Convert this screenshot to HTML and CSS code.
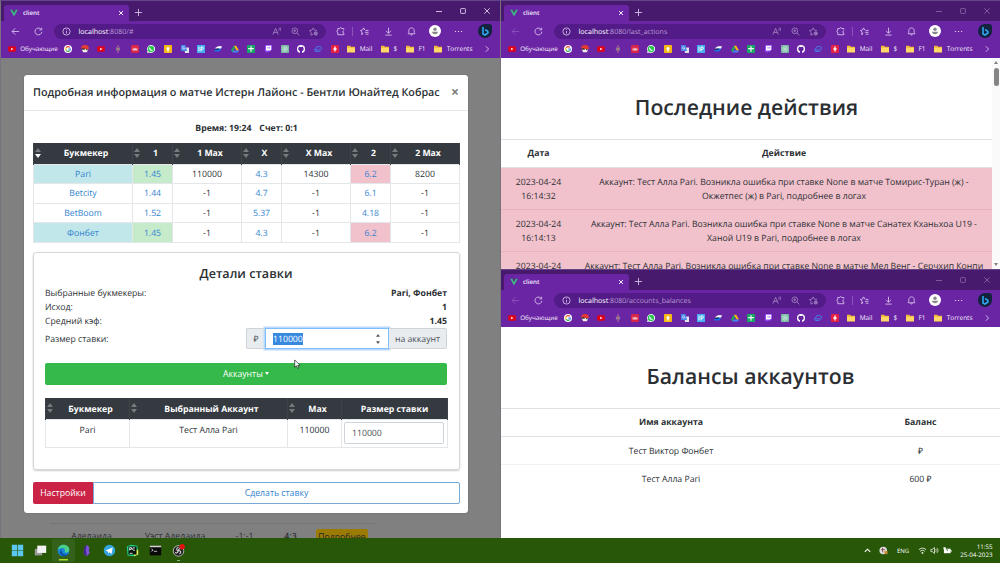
FILE: index.html
```html
<!DOCTYPE html>
<html lang="ru">
<head>
    <meta charset="UTF-8">
    <meta name="viewport" content="width=device-width, initial-scale=1.0">
    <title>client</title>
    <link rel="stylesheet" href="styles.css">
</head>
<body>
    <div class="windows">
        <div class="window window-main">
            <div class="chrome" data-path="/#"></div>
            <div class="page page-dimmed">
                <div class="match-row">
                    <span class="team1">Аделаида</span>
                    <span class="team2">Уэст Аделаида</span>
                    <span class="score1">-1:-1</span>
                    <span class="score2">4:3</span>
                    <button class="btn-more">Подробнее</button>
                </div>
                <div class="modal">
                    <div class="modal-header">
                        <h5>Подробная информация о матче Истерн Лайонс - Бентли Юнайтед Кобрас</h5>
                        <button class="close">×</button>
                    </div>
                    <div class="modal-body">
                        <p class="match-info"><span>Время: 19:24</span><span>Счет: 0:1</span></p>
                        <table class="table odds">
                            <colgroup>
                                <col class="w-name"><col class="w-odd"><col class="w-max"><col class="w-odd"><col class="w-max"><col class="w-odd"><col class="w-max">
                            </colgroup>
                            <thead>
                                <tr>
                                    <th class="sort sort-down">Букмекер</th>
                                    <th class="sort">1</th>
                                    <th class="sort">1 Max</th>
                                    <th class="sort">X</th>
                                    <th class="sort">X Max</th>
                                    <th class="sort">2</th>
                                    <th class="sort">2 Max</th>
                                </tr>
                            </thead>
                            <tbody>
                                <tr>
                                    <td class="link info">Pari</td>
                                    <td class="link success">1.45</td>
                                    <td>110000</td>
                                    <td class="link">4.3</td>
                                    <td>14300</td>
                                    <td class="link danger">6.2</td>
                                    <td>8200</td>
                                </tr>
                                <tr>
                                    <td class="link">Betcity</td>
                                    <td class="link">1.44</td>
                                    <td>-1</td>
                                    <td class="link">4.7</td>
                                    <td>-1</td>
                                    <td class="link">6.1</td>
                                    <td>-1</td>
                                </tr>
                                <tr>
                                    <td class="link">BetBoom</td>
                                    <td class="link">1.52</td>
                                    <td>-1</td>
                                    <td class="link">5.37</td>
                                    <td>-1</td>
                                    <td class="link">4.18</td>
                                    <td>-1</td>
                                </tr>
                                <tr>
                                    <td class="link info">Фонбет</td>
                                    <td class="link success">1.45</td>
                                    <td>-1</td>
                                    <td class="link">4.3</td>
                                    <td>-1</td>
                                    <td class="link danger">6.2</td>
                                    <td>-1</td>
                                </tr>
                            </tbody>
                        </table>
                        <div class="card">
                            <h4>Детали ставки</h4>
                            <div class="detail"><span>Выбранные букмекеры:</span><b>Pari, Фонбет</b></div>
                            <div class="detail"><span>Исход:</span><b>1</b></div>
                            <div class="detail"><span>Средний кэф:</span><b>1.45</b></div>
                            <div class="detail detail-stake">
                                <span>Размер ставки:</span>
                                <div class="input-group">
                                    <span class="addon addon-left">₽</span>
                                    <div class="stake-input">
                                        <span class="selected">110000</span>
                                        <svg class="spin" viewBox="0 0 6 12"><path d="M3 1l2 2.800H1zM3 11l2-2.800H1z"/></svg>
                                    </div>
                                    <span class="addon addon-right">на аккаунт</span>
                                </div>
                            </div>
                            <button class="btn-accounts">Аккаунты <i class="caret"></i></button>
                            <table class="table accounts">
                                <colgroup>
                                    <col class="w-bk"><col class="w-acc"><col class="w-lim"><col class="w-size">
                                </colgroup>
                                <thead>
                                    <tr>
                                        <th class="sort">Букмекер</th>
                                        <th class="sort">Выбранный Аккаунт</th>
                                        <th class="sort">Max</th>
                                        <th>Размер ставки</th>
                                    </tr>
                                </thead>
                                <tbody>
                                    <tr>
                                        <td>Pari</td>
                                        <td>Тест Алла Pari</td>
                                        <td>110000</td>
                                        <td><div class="size-input">110000</div></td>
                                    </tr>
                                </tbody>
                            </table>
                        </div>
                        <div class="btn-group">
                            <button class="btn-settings">Настройки</button>
                            <button class="btn-bet">Сделать ставку</button>
                        </div>
                    </div>
                </div>
                <svg class="cursor" viewBox="0 0 10 15"><path d="M1 1v10.500l2.500-2.200 1.700 3.900 1.800-.8-1.700-3.800h3.300z" fill="#fff" stroke="#222" stroke-width="1"/></svg>
            </div>
        </div>

        <div class="window window-actions inactive">
            <div class="chrome" data-path="/last_actions"></div>
            <div class="page page-scroll">
                <div class="content">
                    <h1>Последние действия</h1>
                    <table class="list actions">
                        <thead>
                            <tr><th class="w-date">Дата</th><th>Действие</th></tr>
                        </thead>
                        <tbody>
                            <tr>
                                <td>2023-04-24<br>16:14:32</td>
                                <td>Аккаунт: Тест Алла Pari. Возникла ошибка при ставке None в матче Томирис-Туран (ж) -<br>Окжетпес (ж) в Pari, подробнее в логах</td>
                            </tr>
                            <tr>
                                <td>2023-04-24<br>16:14:13</td>
                                <td>Аккаунт: Тест Алла Pari. Возникла ошибка при ставке None в матче Санатех Кханьхоа U19 -<br>Ханой U19 в Pari, подробнее в логах</td>
                            </tr>
                            <tr>
                                <td>2023-04-24</td>
                                <td>Аккаунт: Тест Алла Pari. Возникла ошибка при ставке None в матче Мел Венг - Серчхип Конпи</td>
                            </tr>
                        </tbody>
                    </table>
                </div>
                <div class="scrollbar">
                    <i class="arrow-up"></i>
                    <i class="thumb"></i>
                    <i class="arrow-down"></i>
                </div>
            </div>
        </div>

        <div class="window window-balances inactive">
            <div class="chrome" data-path="/accounts_balances"></div>
            <div class="page">
                <div class="content">
                    <h1>Балансы аккаунтов</h1>
                    <table class="list balances">
                        <thead>
                            <tr><th>Имя аккаунта</th><th class="w-balance">Баланс</th></tr>
                        </thead>
                        <tbody>
                            <tr><td>Тест Виктор Фонбет</td><td>₽</td></tr>
                            <tr><td>Тест Алла Pari</td><td>600 ₽</td></tr>
                        </tbody>
                    </table>
                </div>
            </div>
        </div>
    </div>

    <div class="taskbar">
        <div class="apps">
            <span class="app"><svg viewBox="0 0 16 16"><path d="M1 1h6.600v6.600H1zM8.400 1H15v6.600H8.400zM1 8.400h6.600V15H1zM8.400 8.400H15V15H8.400z" fill="#5cc8f2"/></svg></span>
            <span class="app"><svg viewBox="0 0 16 16"><path d="M1 6h9v8H1z" fill="#999"/><path d="M4 2h11v9H4z" fill="#f2f2f2"/></svg></span>
            <span class="app active"><svg viewBox="0 0 16 16"><circle cx="8" cy="8" r="7.200" fill="#1683d8"/><path d="M1 8C1 3 5 .8 8 .8c4.500 0 7.200 3 7.200 6.200 0 2.500-2 3.500-4 3.500-1.500 0-2.500-.6-1.500-2 .5-2-1-3.500-3.500-3.500C4 5 2 6 1 8z" fill="#4bd08a"/><path d="M6 7c-1 3 1 6 5 6 1 0 2-.3 3-1-2 4-8 4-10 0-1-2 0-4 2-5z" fill="#0c4fa0"/></svg></span>
            <span class="app"><svg viewBox="0 0 16 16"><path d="M8.500 1l3 3-.5 4 1 3-3.500 4-4-3 .5-7z" fill="#7d52d8"/><path d="M8.500 1L7 7l1.500 8-4-3 .5-7z" fill="#41278c"/></svg></span>
            <span class="app"><svg viewBox="0 0 16 16"><circle cx="8" cy="8" r="7" fill="#33a6de"/><path d="M3 8l9-3.700-1.500 8-2.700-2-1.500 1.400-.3-2.500z" fill="#fff"/></svg></span>
            <span class="app"><svg viewBox="0 0 16 16"><path d="M1 3l5-2 8 1 1 11-5 2-8-1z" fill="#21d789"/><path d="M9 8l6-1v6l-5 2z" fill="#e9f157"/><path d="M3 3h10v10H3z" fill="#0a140c"/><path d="M4.500 8V4.500h2.200v2H4.500M11 5a1.700 1.700 0 1 0 0 2.400M4.500 11.500H8" fill="none" stroke="#fff"/></svg></span>
            <span class="app"><svg viewBox="0 0 16 16"><path d="M1 2h14v12H1z" fill="#0a0a0a"/><path d="M1 2h14v2H1z" fill="#d0d0d0"/><path d="M3 6l2 1.500L3 9M6 9h4" fill="none" stroke="#ddd"/></svg></span>
            <span class="app running"><svg viewBox="0 0 16 16"><circle cx="8" cy="8.500" r="6.500" fill="#222" stroke="#ccc"/><path d="M8 4c-3 1-3 4 0 4 3 0 4 3 1 4M4 10c1 2 3 1 4-2M12 6c-2-1-4 0-4 2" fill="none" stroke="#d8d8d8" stroke-width="1.300"/><circle cx="12.500" cy="3.300" r="3.300" fill="#e81010"/></svg></span>
        </div>
        <div class="tray">
            <svg class="tray-up" viewBox="0 0 10 10"><path d="M2 6.500l3-3 3 3" fill="none" stroke="#fff" stroke-width="1.200"/></svg>
            <svg class="tray-app" viewBox="0 0 10 10"><circle cx="4.700" cy="5" r="4.200" fill="#ddd"/><path d="M4 2v5M2.500 4h4" stroke="#844"/><path d="M6 5.500h3.500V9H6z" fill="#c98a3a"/></svg>
            <span class="lang">ENG</span>
            <svg class="tray-wifi" viewBox="0 0 10 10"><path d="M1 4.200c2.500-2.400 5.500-2.400 8 0M2.500 5.900c1.600-1.500 3.400-1.500 5 0" fill="none" stroke="#fff"/><circle cx="5" cy="7.700" r="1" fill="#fff"/></svg>
            <svg class="tray-sound" viewBox="0 0 10 10"><path d="M1 3.800h1.500L5 1.700v6.600L2.500 6.200H1zM6.300 3.500c.8.900.8 2.100 0 3M7.700 2.300c1.500 1.600 1.500 3.800 0 5.400" fill="none" stroke="#fff" stroke-width=".8"/></svg>
            <svg class="tray-battery" viewBox="0 0 10 10"><path d="M1 3h7.500v5H1z" fill="#fff"/><path d="M8.500 4.500h1v2h-1zM.5 1.500h2.500v2H.5z" fill="#fff"/><path d="M4 3l1 2.300" stroke="#285a0a"/></svg>
            <div class="clock"><span>11:55</span><span>25-04-2023</span></div>
        </div>
    </div>

    <template id="chrome">
        <div class="tabs">
            <div class="tab">
                <svg class="vue" viewBox="0 0 10 10"><path d="M.3 1h2.700L5 4.800 7 1h2.700L5 9.300z" fill="#41b883"/><path d="M3 1h1.200L5 2.500 5.800 1H7L5 4.800z" fill="#35495e"/></svg>
                <span class="tab-title">client</span>
                <svg class="tab-close" viewBox="0 0 6 6"><path d="M1 1l4 4M5 1L1 5"/></svg>
            </div>
            <svg class="tab-new" viewBox="0 0 10 10"><path d="M5 1v8M1 5h8"/></svg>
            <div class="window-buttons">
                <svg viewBox="0 0 10 10"><path d="M2 5.500h6"/></svg>
                <svg viewBox="0 0 10 10"><rect x="2.600" y="2.600" width="4.800" height="4.800" rx=".6"/></svg>
                <svg viewBox="0 0 10 10"><path d="M2.300 2.300l5.400 5.400M7.700 2.300L2.300 7.700"/></svg>
            </div>
        </div>
        <div class="toolbar">
            <svg class="nav back" viewBox="0 0 10 10"><path d="M9 5H1.200M4.700 1.500L1.200 5l3.500 3.500"/></svg>
            <svg class="nav reload" viewBox="0 0 10 10"><path d="M8.700 5.300A3.800 3.800 0 1 1 7.600 2.300M8.500.8v2.400H6"/></svg>
            <div class="address">
                <svg viewBox="0 0 10 10"><circle cx="5" cy="5" r="4"/><path d="M5 4.500v2.700M5 2.600v.9"/></svg>
                <span class="url"><b>localhost</b>:8080<span class="path"></span></span>
                <svg class="dim" viewBox="0 0 10 10"><path d="M1 8.500L4 1.500l3 7M2 6h4M7.500 1c.7.800.7 2 0 2.800M9 .5c1 1.200 1 2.600 0 3.800"/></svg>
                <svg class="dim" viewBox="0 0 10 10"><circle cx="4.200" cy="4.200" r="3.200"/><path d="M6.600 6.600L9.300 9.300M2.600 4.200h3.200M4.200 2.600v3.200"/></svg>
                <svg class="dim" viewBox="0 0 10 10"><path d="M4.500 8L2 9l.4-3L.5 3.900l2.700-.4L4.700 1l1.400 2.500 2.800.4"/><circle cx="7.500" cy="7.200" r="1.800" fill="#b795d8"/></svg>
            </div>
            <div class="tools">
                <svg viewBox="0 0 10 10"><path d="M8.700 3V1.700H6.300C6.300.4 4 .4 4 1.700H2v2C.6 3.700.6 6 2 6v2.600h6.700V6.700C7 6.700 7 4.200 8.700 4.200"/></svg>
                <i class="divider"></i>
                <svg viewBox="0 0 10 10"><path d="M3.300 6.500L2 8.700l.2-3L.5 3.900l2.300-.5L4 1l1.300 2.400M6 3.800h3.500M5.500 5.900h4M6.300 8h3.200"/></svg>
                <svg viewBox="0 0 10 10"><path d="M5 .8v6M2.300 4.300L5 7l2.700-2.700M1.500 9h7"/></svg>
                <svg viewBox="0 0 10 10"><path d="M1.200 7.500L2 6V4c0-4 6-4 6 0v2l.8 1.500zM4 8c0 1.300 2 1.300 2 0"/></svg>
                <svg class="avatar" viewBox="0 0 12 12"><circle cx="6" cy="6" r="6" fill="#fff" stroke="none"/><circle cx="6" cy="4.300" r="1.700" fill="#888" stroke="none"/><path d="M3 6.800h6c0 3.200-6 3.200-6 0z" fill="#888" stroke="none"/></svg>
                <svg viewBox="0 0 10 10"><path d="M1 5h1.300M4.400 5h1.300M7.800 5h1.300" stroke-width="1.300"/></svg>
            </div>
            <svg class="bing" viewBox="0 0 14 14"><path d="M7 0h4a3 3 0 0 1 3 3v4a7 7 0 0 1-14 0 7 7 0 0 1 7-7z" fill="#13233d"/><path d="M5 3v7l2 1 3-2c.5-2-1-2.500-3-3.200" fill="none" stroke="#2fa8f0" stroke-width="1.600"/></svg>
        </div>
        <div class="bookmarks">
            <svg viewBox="0 0 10 10"><rect x=".2" y="1.600" width="9.600" height="6.800" rx="1.600" fill="#e00018"/><path d="M4 3.500L6.800 5 4 6.500z" fill="#fff"/></svg>
            <span class="learning">Обучающие</span>
            <svg viewBox="0 0 10 10"><circle cx="5" cy="5" r="5" fill="#fff"/><path d="M7.300 3A3 3 0 0 0 2.500 3.500" fill="none" stroke="#ea4335" stroke-width="1.400"/><path d="M2.500 3.500a3 3 0 0 0 0 3" fill="none" stroke="#fbbc05" stroke-width="1.400"/><path d="M2.500 6.500a3 3 0 0 0 4.600.7" fill="none" stroke="#34a853" stroke-width="1.400"/><path d="M7.100 7.200A3 3 0 0 0 8 5H5.200" fill="none" stroke="#4285f4" stroke-width="1.400"/></svg>
            <svg viewBox="0 0 10 10"><path d="M0 5a5 5 0 0 1 10 0z" fill="#e33a35"/><path d="M1 5h8l-1.500 4h-5z" fill="#f4efe9"/><path d="M0 4h4l1 2H2zM6 5h3L7 7z" fill="#333"/></svg>
            <svg viewBox="0 0 10 10"><rect x=".2" y="1.600" width="9.600" height="6.800" rx="1.600" fill="#e00018"/><path d="M4 3.500L6.800 5 4 6.500z" fill="#fff"/></svg>
            <svg viewBox="0 0 10 10"><path d="M5 0v10" stroke="#c07a8c" stroke-width="1.200"/><path d="M3 3v4M7 3v4" stroke="#7f8aa0" stroke-width="1.200"/><circle cx="5" cy="5" r="1" fill="#d8a55a"/></svg>
            <svg viewBox="0 0 10 10"><rect width="10" height="10" rx="1.500" fill="#d8264a"/><path d="M2 7V3l1.500 2L5 3l1.500 2L8 3v4z" fill="#f5c2cc"/></svg>
            <svg viewBox="0 0 10 10"><path d="M0 10l.8-2.600A5 5 0 1 1 2.700 9.300z" fill="#fff"/><circle cx="5" cy="5" r="4" fill="#28c750"/><path d="M3.200 3c0 2.300 1.500 3.800 3.800 4" fill="none" stroke="#fff" stroke-width="1.300"/></svg>
            <svg viewBox="0 0 10 10"><rect width="10" height="10" rx="1" fill="#f5ba14"/><circle cx="5" cy="4.300" r="1.900" fill="#fff"/><path d="M4 6h2v2H4z" fill="#fff"/></svg>
            <svg viewBox="0 0 10 10"><path d="M4 3h6v7H5z" fill="#dfe3ea"/><path d="M0 0h5.500l2 7.500H0z" fill="#4a86e8"/><path d="M4.500 2.700a1.500 1.500 0 1 0 .3 1.500H3.500" fill="none" stroke="#fff" stroke-width=".8"/></svg>
            <svg viewBox="0 0 10 10"><rect width="10" height="10" fill="#45aef0"/><path d="M2.500 2v6M5 8V2.500h1.500a1.500 1.500 0 0 1 0 3H5" fill="none" stroke="#fff" stroke-width="1.200"/></svg>
            <svg viewBox="0 0 10 10"><path d="M1 4l4-2.500h5L8.500 5 5 6z" fill="#fff"/><path d="M0 6.500l5-2h4L6.500 8H1z" fill="#1473e6"/><path d="M2 4.500h5L5 6H1z" fill="#111c44"/></svg>
            <svg viewBox="0 0 10 10"><path d="M3.500 1h3L10 7H7z" fill="#fbbc05"/><path d="M3.500 1L5 3.800 1.700 9.300 0 6.500z" fill="#1fa463"/><path d="M3.300 6.800H10L8.400 9.300H1.700z" fill="#4285f4"/></svg>
            <svg viewBox="0 0 10 10"><rect width="10" height="10" rx=".8" fill="#16a765"/><path d="M5 1.500v7M1.500 4.500h7" stroke="#fff" stroke-width="1.400"/></svg>
            <svg viewBox="0 0 10 10"><path d="M1.500 0H10v6L7 8.500H5L3.500 10V8.500H1z" fill="#9147ff"/><path d="M2.500 1H9v4.500L7.500 7H2.500z" fill="#fff"/><path d="M5 2.500v2M7.200 2.500v2" stroke="#9147ff"/></svg>
            <svg viewBox="0 0 10 10"><rect width="10" height="10" rx="1" fill="#7dbba7"/><circle cx="5" cy="5" r="2.800" fill="none" stroke="#dff2ec" stroke-width=".9"/><path d="M3.500 3.500L6.500 6.500M6.500 3.500L3.500 6.500" stroke="#dff2ec" stroke-width=".7"/></svg>
            <svg viewBox="0 0 10 10"><circle cx="5" cy="5" r="5" fill="#fff"/><path d="M3.700 9.900V7.700C1 7 1.500 3.500 2.300 3.200V1.800l1.500.8h2.400l1.500-.8v1.400C8.500 4 9 7 6.300 7.700v2.200z" fill="#6522a0"/></svg>
            <svg viewBox="0 0 10 10"><path d="M2.300 8C.3 8 .2 5.300 2 4.800 2.500 2.300 5 1 7 2c3 0 3 3 1.500 4C7.500 8 5 8.500 2.300 8zM2 5c1 2 3.500 2 5-.5" fill="none" stroke="#3f8cf5" stroke-width="1.200"/></svg>
            <svg viewBox="0 0 10 10"><rect width="10" height="10" rx="1" fill="#e32243"/><path d="M5 2v6M3 5h4" stroke="#fff" stroke-width="1.600"/></svg>
            <span class="folder"><svg viewBox="0 0 10 10"><path d="M0 1h4l1 1.300h5v6.900H0z" fill="#f0b93a"/><path d="M0 3.500h10v5.700H0z" fill="#ffd767"/></svg>Mail</span>
            <span class="folder"><svg viewBox="0 0 10 10"><path d="M0 1h4l1 1.300h5v6.900H0z" fill="#f0b93a"/><path d="M0 3.500h10v5.700H0z" fill="#ffd767"/></svg>$</span>
            <span class="folder"><svg viewBox="0 0 10 10"><path d="M0 1h4l1 1.300h5v6.900H0z" fill="#f0b93a"/><path d="M0 3.500h10v5.700H0z" fill="#ffd767"/></svg>F1</span>
            <span class="folder"><svg viewBox="0 0 10 10"><path d="M0 1h4l1 1.300h5v6.900H0z" fill="#f0b93a"/><path d="M0 3.500h10v5.700H0z" fill="#ffd767"/></svg>Torrents</span>
            <svg class="more" viewBox="0 0 10 10"><path d="M3.500 1.500L7 5 3.500 8.500" fill="none" stroke="#e6d6f5"/></svg>
        </div>
    </template>
    <script src="script.js"></script>
</body>
</html>
```
FILE: styles.css
```css
* {
    box-sizing: border-box;
}
body {
    margin: 0;
    width: 1000px;
    height: 563px;
    overflow: hidden;
    display: flex;
    flex-direction: column;
    font-family: "Open Sans", "Noto Sans", sans-serif;
    font-size: 8.7px;
    color: #2b2f33;
    text-rendering: geometricPrecision;
}
button {
    font-family: inherit;
    font-size: inherit;
    margin: 0;
    padding: 0;
    border: none;
}
h1, h4, h5, p {
    margin: 0;
}
svg {
    display: block;
    flex: none;
}
.windows {
    display: grid;
    grid-template-columns: 500px 500px;
    grid-template-rows: 269px 269px;
}
.window {
    display: flex;
    flex-direction: column;
    overflow: hidden;
    border-left: 1px solid #77727c;
    border-top: 1px solid #65458a;
    background: #fff;
}
.window-main {
    grid-row: 1 / 3;
}

/* browser chrome */
.chrome {
    height: 57px;
    flex: none;
    background: #6a25a5;
    color: #f3eafa;
    font-size: 6.5px;
}
.chrome svg {
    width: 9px;
    height: 9px;
}
.tabs, .toolbar {
    fill: none;
    stroke: #e0cdf0;
    stroke-width: 0.9;
}
.tabs {
    display: flex;
    height: 20px;
    padding-left: 3px;
    background: #471a6e;
}
.tab {
    display: flex;
    align-items: center;
    width: 125px;
    height: 16px;
    margin-top: 4px;
    padding: 0 5px 0 6px;
    background: #6a25a5;
    border-radius: 3px 3px 0 0;
}
.tab .vue {
    width: 8px;
    height: 8px;
    stroke: none;
}
.tab-title {
    flex: 1;
    margin-left: 5px;
    font-weight: 600;
    font-size: 6.2px;
    line-height: 8px;
}
.tab .tab-close {
    width: 6px;
    height: 6px;
    stroke: #fff;
}
.tabs .tab-new {
    margin: 7px 0 0 5px;
}
.window-buttons {
    display: flex;
    gap: 14px;
    margin: 5px 8px 0 auto;
}
.window-buttons svg {
    width: 10px;
    height: 10px;
}
.inactive .window-buttons {
    opacity: 0.4;
}
.toolbar {
    display: flex;
    align-items: center;
    height: 20px;
    padding: 0 8px 0 10px;
}
.toolbar .reload {
    margin: 0 11px 0 14px;
}
.inactive .back {
    opacity: 0.3;
}
.address {
    display: flex;
    align-items: center;
    gap: 9.5px;
    width: 272px;
    height: 15px;
    padding: 0 8px;
    border-radius: 8px;
    background: #531b87;
}
.url {
    flex: 1;
    margin-left: -2px;
    padding-top: 1px;
    font-size: 7.1px;
    line-height: 10px;
    color: #b696d3;
}
.url b {
    font-weight: 400;
    color: #fff;
}
.dim {
    opacity: 0.6;
}
.tools {
    flex: 1;
    display: flex;
    align-items: center;
    gap: 14.2px;
    padding-left: 10px;
}
.divider {
    width: 1px;
    height: 9px;
    margin: 0 -7px;
    background: #8a55bb;
}
.tools .avatar {
    width: 12px;
    height: 12px;
    margin: 0 -1px;
}
.toolbar .bing {
    width: 14px;
    height: 14px;
    stroke: none;
}
.bookmarks {
    display: flex;
    align-items: center;
    gap: 8.67px;
    height: 15px;
    padding-left: 7px;
    white-space: nowrap;
}
.bookmarks svg {
    width: 8px;
    height: 8px;
}
.learning {
    width: 35.2px;
    margin-left: -4.5px;
    font-size: 6.3px;
}
.folder {
    display: flex;
    align-items: center;
    gap: 4.5px;
}
.bookmarks .more {
    margin: 0 9px 0 auto;
}

/* page with modal */
.page {
    position: relative;
    flex: 1;
    overflow: hidden;
}
.page-dimmed {
    display: flex;
    flex-direction: column;
    justify-content: flex-end;
    background: #808080;
}
.match-row {
    display: flex;
    height: 15px;
    width: 325px;
    margin-left: 49px;
    padding-top: 6px;
    border-top: 1px solid #757575;
    text-align: center;
    white-space: nowrap;
}
.team1 {
    width: 83px;
}
.team2 {
    width: 84px;
}
.score1 {
    width: 55px;
}
.score2 {
    width: 37px;
    font-weight: 600;
}
.btn-more {
    width: 52px;
    height: 16px;
    margin-left: 7px;
    margin-top: -1px;
    border-radius: 2px 2px 0 0;
    background: #9c7b05;
    color: #24282b;
    flex: none;
}
.modal {
    position: absolute;
    left: 23px;
    top: 17px;
    width: 444px;
    height: 438px;
    background: #fff;
    border-radius: 3px;
    box-shadow: 0 0 1px #444;
}
.modal-header {
    display: flex;
    align-items: center;
    justify-content: space-between;
    height: 36px;
    padding: 0 9px;
    border-bottom: 1px solid #e6e8ea;
}
.modal-header h5 {
    font-size: 10.75px;
    font-weight: 600;
    white-space: nowrap;
}
.close {
    background: none;
    font-size: 14px;
    font-weight: 700;
    color: #7c7c7c;
    line-height: 12px;
    padding-bottom: 2px;
}
.modal-body {
    padding: 11px 8px 0 9px;
}
.match-info {
    display: flex;
    justify-content: center;
    gap: 8px;
    height: 21px;
    line-height: 12px;
    font-weight: 700;
}
.table {
    width: 100%;
    table-layout: fixed;
    border-collapse: collapse;
    text-align: center;
}
.table th {
    position: relative;
    height: 21px;
    padding: 0;
    background: #343a40;
    border: 1px solid #3c4349;
    border-width: 0 1px;
    color: #fff;
    font-weight: 700;
}
.table .sort {
    padding-left: 6px;
}
.sort::before, .sort::after {
    content: "";
    position: absolute;
    left: 1px;
    border: 3px solid transparent;
}
.sort::before {
    top: 2px;
    border-bottom: 4px solid #767b80;
}
.sort::after {
    top: 11px;
    border-top: 4px solid #767b80;
}
.sort-down::after {
    border-top-color: #fff;
}
.table td {
    height: 19.6px;
    padding: 0;
    border: 1px solid #e4e7ea;
}
.w-name { width: 99px; }
.w-odd { width: 40px; }
.w-max { width: 69px; }
.table .link { color: #3183cf; }
.info { background: #c2e7eb; }
.success { background: #c6ebcb; }
.danger { background: #f1c1cc; }

.card {
    height: 218px;
    margin-top: 9px;
    padding: 12px 12px 0 11px;
    border: 1px solid #d5d7d9;
    border-radius: 3px;
    box-shadow: 0 1px 2px rgba(0, 0, 0, 0.2);
}
.card h4 {
    height: 21.5px;
    font-size: 12.6px;
    line-height: 17px;
    font-weight: 600;
    text-align: center;
}
.detail {
    display: flex;
    align-items: center;
    justify-content: space-between;
    height: 13.8px;
}
.detail-stake {
    height: 21.5px;
}
.input-group {
    display: flex;
    width: 201px;
    height: 21.5px;
}
.addon {
    display: flex;
    align-items: center;
    justify-content: center;
    background: #e9ecef;
    border: 1px solid #ced4da;
    color: #495057;
}
.addon-left {
    width: 19px;
    border-right: none;
    border-radius: 2px 0 0 2px;
}
.addon-right {
    flex: 1;
    border-left: none;
    border-radius: 0 2px 2px 0;
}
.stake-input {
    display: flex;
    align-items: center;
    justify-content: space-between;
    width: 124px;
    padding: 0 7px;
    background: #fff;
    border: 1px solid #80bdff;
    box-shadow: 0 0 0 1.5px #b9d9fb;
}
.selected {
    background: #3789e0;
    color: #fff;
}
.spin {
    width: 6px;
    height: 12px;
    fill: #555;
}
.btn-accounts {
    display: block;
    width: 100%;
    height: 22px;
    margin: 13.5px 0;
    border-radius: 2px;
    background: #34b94a;
    color: #fff;
}
.caret {
    display: inline-block;
    border: 2.5px solid transparent;
    border-top: 3px solid #fff;
    border-bottom: none;
    vertical-align: 2px;
}
.accounts td {
    height: 28px;
    padding: 4px 3px;
    vertical-align: top;
}
.w-bk { width: 84px; }
.w-acc { width: 158px; }
.w-lim { width: 54px; }
.w-size { width: 106px; }
.size-input {
    height: 22px;
    margin: -2px 0 -4px -1px;
    padding-left: 7px;
    line-height: 21px;
    text-align: left;
    border: 1px solid #ced4da;
    border-radius: 2px;
    color: #495057;
}
.btn-group {
    display: flex;
    height: 22px;
    margin-top: 12px;
}
.btn-settings {
    width: 60px;
    border-radius: 2px 0 0 2px;
    background: #cb2346;
    color: #fff;
}
.btn-bet {
    flex: 1;
    border: 1px solid #76a9d6;
    border-radius: 0 2px 2px 0;
    background: #fff;
    color: #3183cf;
}
.cursor {
    position: absolute;
    left: 293px;
    top: 301px;
    width: 7px;
    height: 11px;
}

/* pages on the right */
.page-scroll {
    display: flex;
}
.content {
    flex: 1;
}
.content h1 {
    height: 81px;
    padding-top: 34px;
    font-size: 21.2px;
    line-height: 31px;
    font-weight: 600;
    text-align: center;
}
.list {
    width: 100%;
    table-layout: fixed;
    border-collapse: collapse;
    text-align: center;
    line-height: 14px;
}
.list th, .list td {
    padding: 7px 2px 6px;
    border-top: 1px solid #dee2e6;
    white-space: nowrap;
}
.list th {
    padding: 6px 2px 7px;
    border-bottom: 1px solid #dee2e6;
}
.actions td {
    background: #f1c1cc;
    border-color: #e6b3bf;
}
.balances tbody tr + tr td {
    border-color: #eff1f3;
}
.w-date { width: 75px; }
.w-balance { width: 159px; }
.scrollbar {
    display: flex;
    flex-direction: column;
    align-items: center;
    width: 8px;
    padding: 3px 0;
    background: #fafafa;
}
.arrow-up {
    border: 2.5px solid transparent;
    border-top: none;
    border-bottom: 3px solid #808080;
}
.thumb {
    width: 5px;
    height: 18px;
    margin-top: 4px;
    border-radius: 3px;
    background: #858585;
}
.arrow-down {
    margin-top: auto;
    border: 2.5px solid transparent;
    border-bottom: none;
    border-top: 3px solid #808080;
}

/* taskbar */
.taskbar {
    display: flex;
    justify-content: space-between;
    height: 25px;
    background: #285708;
    color: #fff;
}
.apps {
    display: flex;
    padding: 1px 0 0 5.5px;
}
.app {
    display: flex;
    align-items: center;
    justify-content: center;
    width: 23px;
    height: 23px;
    border-radius: 2px;
}
.app svg {
    width: 13px;
    height: 13px;
}
.active {
    background: linear-gradient(#b4dc2a, #b4dc2a) center 20px / 9px 1.5px no-repeat #34621b;
}
.running {
    background: linear-gradient(#8fb37c, #8fb37c) center 21px / 3px 1px no-repeat;
}
.tray {
    display: flex;
    align-items: center;
    gap: 3.5px;
    padding-right: 7.5px;
    font-size: 6.2px;
}
.tray svg {
    width: 9px;
    height: 9px;
}
.tray .tray-app {
    margin: 0 5px 0 4px;
}
.lang {
    font-size: 6px;
    margin-right: 5px;
}
.clock {
    display: flex;
    flex-direction: column;
    margin-left: 5px;
    line-height: 8px;
    text-align: right;
}
```
FILE: script.js
```javascript
let template = document.getElementById("chrome");

document.querySelectorAll(".chrome").forEach(function (chrome) {
    chrome.appendChild(template.content.cloneNode(true));
    chrome.querySelector(".path").textContent = chrome.dataset.path;
});
```
